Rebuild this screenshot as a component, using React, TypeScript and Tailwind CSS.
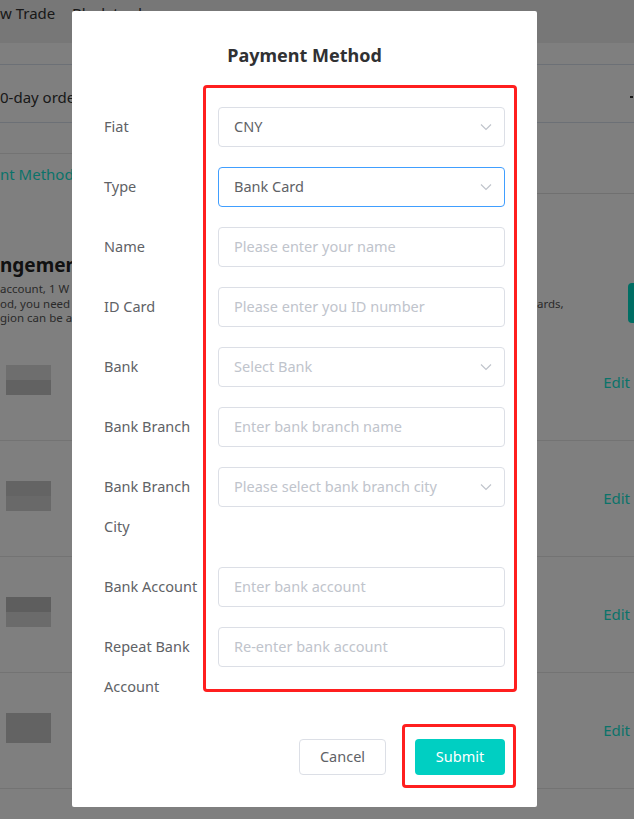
import React from "react";

const font = { fontFamily: '"Noto Sans", "Liberation Sans", sans-serif' };

function Chevron() {
  return (
    <svg width="12" height="8" viewBox="0 0 12 8" className="shrink-0">
      <path d="M1 1.5 L6 6.5 L11 1.5" fill="none" stroke="#c0c4cc" strokeWidth="1.2" />
    </svg>
  );
}

function Field({
  label,
  value,
  placeholder,
  select,
  focused,
}: {
  label: React.ReactNode;
  value?: string;
  placeholder?: string;
  select?: boolean;
  focused?: boolean;
}) {
  return (
    <div className="flex items-start mb-5">
      <div className="w-[114px] pr-[12px] shrink-0 text-[14.5px] leading-[39px] text-[#606266]">{label}</div>
      <div
        className={
          "flex-1 h-[40px] rounded-[4px] border flex items-center pl-[15px] pr-[12px] text-[14.5px] leading-[20px] " +
          (focused ? "border-[#409eff]" : "border-[#dcdfe6]")
        }
      >
        <span className={"flex-1 truncate -mt-[2px] " + (value ? "text-[#606266]" : "text-[#c0c4cc]")}>
          {value || placeholder}
        </span>
        {select ? <Chevron /> : null}
      </div>
    </div>
  );
}

function BlurThumb({ top = "bg-[#d4d4d4]", bottom = "bg-[#bcbcbc]" }: { top?: string; bottom?: string }) {
  return (
    <div className="w-[45px] flex flex-col">
      <div className={"h-[15px] " + top} />
      <div className={"h-[15px] " + bottom} />
    </div>
  );
}

function AccountRow({ thumb }: { thumb: React.ReactNode }) {
  return (
    <div className="h-[116px] border-b border-[#e6e6e6] flex items-center justify-between pl-[6px] pr-[4px]">
      <div className="-mt-[6px]">{thumb}</div>
      <span className="text-[15px] text-[#15e6d4]">Edit</span>
    </div>
  );
}

export default function App() {
  return (
    <div className="relative w-[634px] h-[819px] overflow-hidden bg-white" style={font}>
      {/* page underneath */}
      <div className="h-[43px] bg-[#eeeeee] flex items-start pt-[2px] text-[15px] text-[#333]">
        <span className="w-[72px]">w Trade</span>
        <span>Black trade</span>
      </div>
      <div className="h-[21px]" />
      <div className="h-[59px] border-t border-b border-[#d8e0ec] flex items-center pt-[7px] pr-[1px] text-[15px] text-[#333]">
        <span>0-day orders</span>
        <div className="ml-auto w-[3px] h-[2px] bg-[#333]" />
      </div>
      <div className="flex">
        <div className="w-[72px]">
          <div className="h-[31px] border-b border-[#e6e6e6]" />
          <div className="h-[40px] flex items-center text-[15px] text-[#15e6d4] whitespace-nowrap">nt Method</div>
        </div>
        <div className="flex-1 h-[71px] border-b border-[#e0e0e0]" />
      </div>
      <div className="h-[58px]" />
      <div className="flex items-start">
        <div className="flex-1">
          <div className="text-[19px] leading-[26px] font-bold text-[#222] whitespace-nowrap">ngement</div>
          <div className="mt-[4px] text-[11.5px] leading-[14px] text-[#555] whitespace-nowrap">account, 1 W</div>
          <div className="flex mt-[1px] text-[11.5px] leading-[14px] text-[#555] whitespace-nowrap">
            <div className="w-[537px]">
              <div>od, you need</div>
              <div>gion can be a</div>
            </div>
            <div>ards,</div>
          </div>
        </div>
        <div className="mt-[31px] w-[6px] h-[40px] rounded-l-[4px] bg-[#00dcc8]" />
      </div>
      <div className="h-[0px]" />
      <AccountRow thumb={<BlurThumb top="bg-[#dcdcdc]" bottom="bg-[#c4c4c4]" />} />
      <AccountRow thumb={<BlurThumb top="bg-[#c8c8c8]" bottom="bg-[#d2d2d2]" />} />
      <AccountRow thumb={<BlurThumb top="bg-[#bcbcbc]" bottom="bg-[#d6d6d6]" />} />
      <AccountRow thumb={<BlurThumb top="bg-[#c6c6c6]" bottom="bg-[#c6c6c6]" />} />

      {/* overlay */}
      <div className="absolute inset-0 bg-black/50" />

      {/* dialog */}
      <div className="absolute left-[72px] top-[11px] w-[465px] h-[796px] bg-white rounded-[2px] flex flex-col">
        <h2 className="pt-[31px] text-center text-[18px] leading-[26px] font-bold text-[#303133]">Payment Method</h2>
        <div className="mt-[39px] px-[32px]">
          <Field label="Fiat" value="CNY" select />
          <Field label="Type" value="Bank Card" select focused />
          <Field label="Name" placeholder="Please enter your name" />
          <Field label="ID Card" placeholder="Please enter you ID number" />
          <Field label="Bank" placeholder="Select Bank" select />
          <Field label="Bank Branch" placeholder="Enter bank branch name" />
          <Field
            label={
              <span className="block leading-[40px] -mt-[1px] pb-[1px]">
                Bank Branch
                <br />
                City
              </span>
            }
            placeholder="Please select bank branch city"
            select
          />
          <Field label="Bank Account" placeholder="Enter bank account" />
          <Field
            label={
              <span className="block leading-[40px] -mt-[1px] pb-[1px]">
                Repeat Bank
                <br />
                Account
              </span>
            }
            placeholder="Re-enter bank account"
          />
        </div>
        <div className="mt-auto pb-[32px] pr-[32px] flex justify-end gap-[29px]">
          <button className="w-[87px] h-[36px] rounded-[4px] border border-[#dcdfe6] text-[14.5px] text-[#606266]">
            Cancel
          </button>
          <button className="w-[90px] h-[36px] rounded-[4px] bg-[#00cfc2] text-[14.5px] text-white">Submit</button>
        </div>

        {/* annotation boxes */}
        <div className="absolute left-[131px] top-[74px] w-[314px] h-[607px] border-[3px] border-[#ff1f1f] rounded-[4px]" />
        <div className="absolute left-[330px] top-[713px] w-[114px] h-[64px] border-[3px] border-[#ff1f1f] rounded-[4px]" />
      </div>
    </div>
  );
}
